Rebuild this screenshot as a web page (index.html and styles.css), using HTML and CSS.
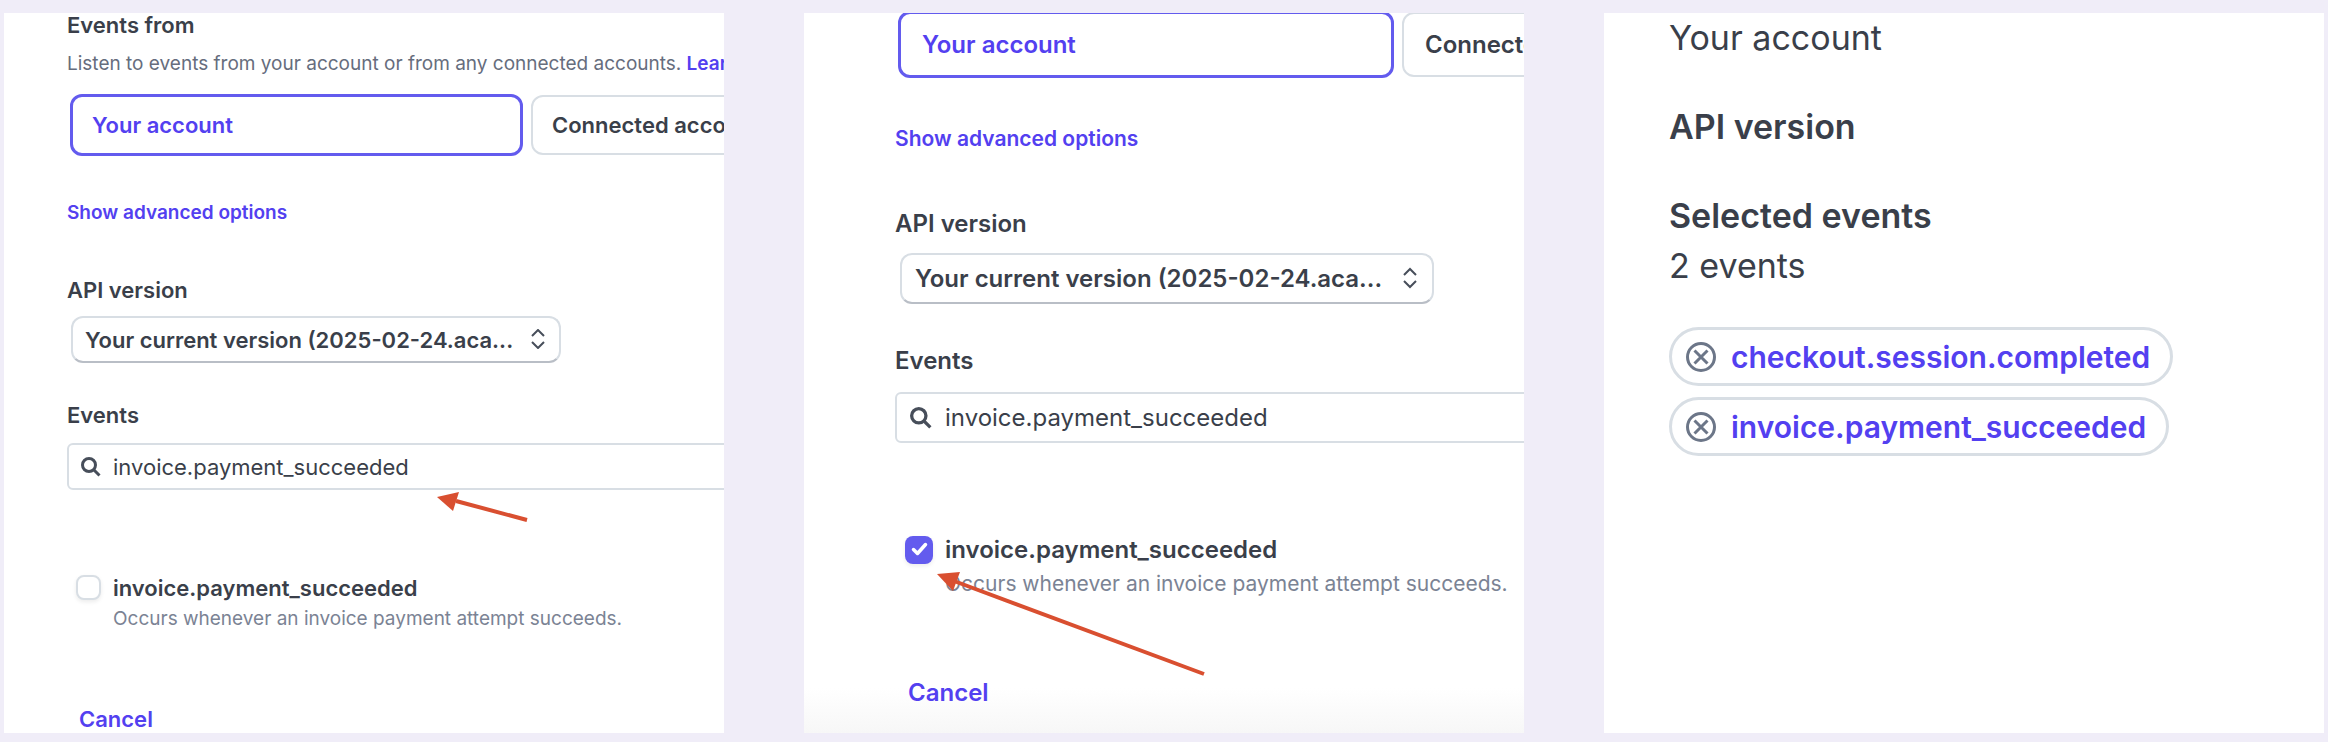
FILE: index.html
```html
<!DOCTYPE html>
<html lang="en">
  <head>
    <meta charset="utf-8" />
    <title>Webhook events</title>
    <link rel="stylesheet" href="styles.css">
  </head>
  <body>
    <main class="steps">
      <section class="panel">
        <form class="form">
          <h2 class="label">Events from</h2>
          <p class="hint">
            Listen to events from your account or from any connected accounts.
            <a href="#learn">Learn more</a>
          </p>
          <div class="options">
            <button type="button" class="option selected">Your account</button>
            <button type="button" class="option">Connected accounts</button>
          </div>
          <a class="advanced" href="#advanced">Show advanced options</a>

          <label class="label version-label" for="version1">API version</label>
          <div class="select">
            <select id="version1">
              <option>Your current version (2025-02-24.aca...</option>
            </select>
            <svg class="chevrons" viewBox="0 0 16 20">
              <path d="M2 7l6-6 6 6M2 13l6 6 6-6" />
            </svg>
          </div>

          <label class="label events-label" for="search1">Events</label>
          <div class="search">
            <svg class="magnifier" viewBox="0 0 20 20">
              <circle cx="8" cy="8" r="6.5" />
              <path d="M13 13l5.5 5.5" />
            </svg>
            <input type="text" id="search1" value="invoice.payment_succeeded" />
          </div>

          <div class="event">
            <input type="checkbox" id="event1" />
            <label class="label" for="event1">invoice.payment_succeeded</label>
            <p class="event-hint">Occurs whenever an invoice payment attempt succeeds.</p>
          </div>
          <button type="button" class="cancel">Cancel</button>
        </form>
        <svg class="arrow" viewBox="0 0 720 720">
          <path class="line" d="M523 507L452 488" />
          <path class="head" d="M433 484L455 479L449 498z" />
        </svg>
      </section>

      <section class="panel faded">
        <form class="form large">
          <div class="options">
            <button type="button" class="option selected">Your account</button>
            <button type="button" class="option">Connected accounts</button>
          </div>
          <a class="advanced" href="#advanced">Show advanced options</a>

          <label class="label version-label" for="version2">API version</label>
          <div class="select">
            <select id="version2">
              <option>Your current version (2025-02-24.aca...</option>
            </select>
            <svg class="chevrons" viewBox="0 0 16 20">
              <path d="M2 7l6-6 6 6M2 13l6 6 6-6" />
            </svg>
          </div>

          <label class="label events-label" for="search2">Events</label>
          <div class="search">
            <svg class="magnifier" viewBox="0 0 20 20">
              <circle cx="8" cy="8" r="6.5" />
              <path d="M13 13l5.5 5.5" />
            </svg>
            <input type="text" id="search2" value="invoice.payment_succeeded" />
          </div>

          <div class="event">
            <input type="checkbox" id="event2" checked />
            <label class="label" for="event2">invoice.payment_succeeded</label>
            <p class="event-hint">Occurs whenever an invoice payment attempt succeeds.</p>
          </div>
          <button type="button" class="cancel">Cancel</button>
        </form>
        <svg class="arrow" viewBox="0 0 720 720">
          <path class="line" d="M400 661L150 568" />
          <path class="head" d="M133 561L156 559L149 578z" />
        </svg>
      </section>

      <section class="panel summary">
        <p>Your account</p>
        <h2>API version</h2>
        <h2>Selected events</h2>
        <p>2 events</p>
        <ul class="chips">
          <li class="chip">
            <button type="button" aria-label="Remove">
              <svg viewBox="0 0 30 30">
                <circle cx="15" cy="15" r="13.5" />
                <path d="M8.5 8.5l13 13M21.5 8.5l-13 13" />
              </svg>
            </button>
            <a href="#checkout">checkout.session.completed</a>
          </li>
          <li class="chip">
            <button type="button" aria-label="Remove">
              <svg viewBox="0 0 30 30">
                <circle cx="15" cy="15" r="13.5" />
                <path d="M8.5 8.5l13 13M21.5 8.5l-13 13" />
              </svg>
            </button>
            <a href="#invoice">invoice.payment_succeeded</a>
          </li>
        </ul>
      </section>
    </main>
  </body>
</html>
```
FILE: styles.css
```css
* {
  box-sizing: border-box;
}
body {
  margin: 0;
  background-color: #f0edf8;
  color: #3a3f4a;
  font-family: Inter, "Liberation Sans", sans-serif;
}
h2,
p,
ul {
  margin: 0;
  padding: 0;
}
a {
  color: #5340f0;
  font-weight: 600;
  text-decoration: none;
}
button,
input,
select {
  font-family: inherit;
  color: inherit;
}
.steps {
  display: grid;
  grid-template-columns: repeat(3, minmax(0, 1fr));
  gap: 80px;
  padding: 13px 4px 9px;
}
.panel {
  position: relative;
  aspect-ratio: 1;
  overflow: hidden;
  background-color: white;
}
.faded {
  background-image: linear-gradient(to top, #f7f7f7, white 45px);
}

/* Webhook form */
.form {
  --text: 22px;
  --small: 19px;
  --line: 24px;
  --control: 47px;
  display: flex;
  flex-direction: column;
  align-items: flex-start;
  width: 1000px;
  padding-left: 63px;
  font-size: var(--text);
  line-height: var(--line);
}
.label {
  font-size: var(--text);
  font-weight: 600;
}
.hint {
  margin-top: 15px;
  color: #666d7d;
  font-size: var(--small);
}
.options {
  display: flex;
  align-items: center;
  gap: 8px;
  margin: 18px 0 0 3px;
}
.option {
  width: 453px;
  height: 60px;
  padding: 0 19px;
  border: 2px solid #d8dee4;
  border-radius: 12px;
  background-color: white;
  font-size: var(--text);
  font-weight: 600;
  text-align: left;
}
.option.selected {
  height: 62px;
  border: 3px solid #635bee;
  color: #5340f0;
}
.advanced {
  margin-top: 45px;
  font-size: var(--small);
}
.version-label {
  margin-top: 53px;
}
.select {
  position: relative;
  width: 490px;
  margin: 14px 0 0 4px;
}
.select select {
  display: block;
  width: 100%;
  height: var(--control);
  padding: 0 12px;
  appearance: none;
  border: 2px solid #d8dee4;
  border-bottom-color: #b9bec6;
  border-radius: 12px;
  background-color: white;
  font-size: var(--text);
  font-weight: 600;
}
.chevrons {
  position: absolute;
  top: 13px;
  right: 15px;
  width: 16px;
  height: 20px;
  fill: none;
  stroke: #474e5a;
  stroke-width: 2;
}
.events-label {
  margin-top: 40px;
}
.search {
  display: flex;
  align-items: center;
  gap: 12px;
  width: 100%;
  height: var(--control);
  margin-top: 16px;
  padding-left: 12px;
  border: 2px solid #d8dee4;
  border-radius: 6px;
}
.search input {
  flex: 1;
  padding: 0;
  border: none;
  outline: none;
  font-size: var(--text);
}
.magnifier {
  width: 20px;
  height: 20px;
  fill: none;
  stroke: #474e5a;
  stroke-width: 3;
}
.event {
  display: grid;
  grid-template-columns: auto 1fr;
  align-items: center;
  column-gap: 12px;
  row-gap: 7px;
  margin: 85px 0 0 9px;
}
.event input {
  width: 25px;
  height: 25px;
  margin: 0;
  appearance: none;
  border: 2px solid #d8dee4;
  border-radius: 8px;
  background-color: white;
  box-shadow: 0 2px 4px rgba(0, 0, 0, 0.08);
}
.event input:checked {
  border: none;
  background: #635bee
    url("data:image/svg+xml,%3Csvg xmlns='http://www.w3.org/2000/svg' viewBox='0 0 28 28'%3E%3Cpath d='M8.5 13.5l4 4 8-9' fill='none' stroke='white' stroke-width='3.5' stroke-linecap='round' stroke-linejoin='round'/%3E%3C/svg%3E");
}
.event-hint {
  grid-column: 2;
  color: #7b8394;
  font-size: var(--small);
}
.cancel {
  margin: 76px 0 0 12px;
  padding: 0;
  border: none;
  background: none;
  color: #5340f0;
  font-size: var(--text);
  font-weight: 600;
  line-height: var(--line);
}

/* Same form, one zoom step up */
.large {
  --text: 24px;
  --small: 21px;
  --line: 26px;
  --control: 51px;
  padding-left: 91px;
}
.large .options {
  gap: 8px;
  margin-top: -2px;
}
.large .option {
  width: 496px;
  height: 65px;
  padding: 0 21px;
}
.large .option.selected {
  height: 67px;
}
.large .advanced {
  margin-top: 48px;
}
.large .version-label {
  margin-top: 59px;
}
.large .select {
  width: 534px;
  margin: 16px 0 0 5px;
}
.large .select select {
  padding: 0 13px;
}
.large .chevrons {
  top: 14px;
  right: 16px;
  height: 22px;
}
.large .events-label {
  margin-top: 44px;
}
.large .search {
  gap: 13px;
  margin-top: 18px;
  padding-left: 13px;
}
.large .magnifier {
  width: 22px;
  height: 22px;
}
.large .event {
  row-gap: 7px;
  margin: 93px 0 0 10px;
}
.large .event input {
  width: 28px;
  height: 28px;
}
.large .cancel {
  margin: 83px 0 0 13px;
}

.arrow {
  position: absolute;
  inset: 0;
  pointer-events: none;
}
.arrow .line {
  fill: none;
  stroke: #d94f30;
  stroke-width: 4;
}
.arrow .head {
  fill: #d94f30;
}

/* Summary */
.summary {
  padding-left: 65px;
  font-size: 34px;
  line-height: 50px;
}
.summary h2 {
  margin-top: 39px;
  font-size: 34px;
  font-weight: 600;
}
.chips {
  display: flex;
  flex-direction: column;
  align-items: flex-start;
  gap: 11px;
  margin-top: 36px;
  list-style: none;
}
.chip {
  display: flex;
  align-items: center;
  gap: 15px;
  height: 59px;
  padding: 0 20px 0 14px;
  border: 3px solid #d8dee4;
  border-radius: 30px;
  font-size: 30px;
}
.chip button {
  display: flex;
  padding: 0;
  border: none;
  background: none;
}
.chip svg {
  width: 30px;
  height: 30px;
  fill: none;
  stroke: #6c7688;
  stroke-width: 3;
}
```
